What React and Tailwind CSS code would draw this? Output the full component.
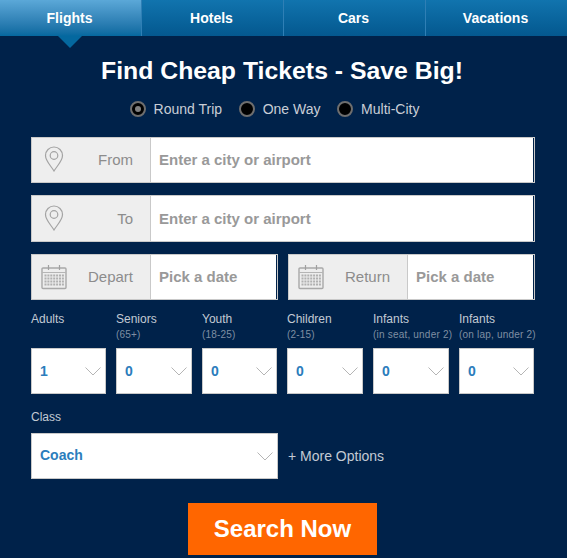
import React from 'react';

const FONT = "font-['Liberation_Sans',Arial,sans-serif]";

function Pin() {
  return (
    <svg width="20" height="26" viewBox="0 0 20 26" fill="none" stroke="#a3a3a3" strokeWidth="1.2">
      <path d="M10 25 C7 20 1.5 15 1.5 9.5 A8.5 8.5 0 0 1 18.5 9.5 C18.5 15 13 20 10 25 Z" />
      <circle cx="10" cy="9.5" r="3.8" />
    </svg>
  );
}

function Calendar() {
  const cells = [];
  for (let r = 0; r < 4; r++) {
    for (let c = 0; c < 7; c++) {
      cells.push(<rect key={`${r}-${c}`} x={3.5 + c * 2.9} y={10.5 + r * 3} width="2" height="2" fill="#b0b0b0" />);
    }
  }
  return (
    <svg width="26" height="26" viewBox="0 0 26 26" fill="none">
      <rect x="1" y="4" width="24" height="20.5" rx="1" fill="#ededed" stroke="#a8a8a8" strokeWidth="1.4" />
      <path d="M1 8.5 H25" stroke="#b5b5b5" />
      <path d="M7.5 1 V6 M18.5 1 V6" stroke="#a0a0a0" strokeWidth="1.2" />
      {cells}
    </svg>
  );
}

function Chevron() {
  return (
    <svg width="16" height="9" viewBox="0 0 16 9" fill="none" stroke="#b5b5b5" strokeWidth="1">
      <path d="M0.5 0.5 L8 8 L15.5 0.5" />
    </svg>
  );
}

function Field({ icon, label, placeholder, iconClass, height = 'h-[46px]', textClass = '' }) {
  return (
    <div className={`flex ${height} border border-[#c9c9c9] bg-white`}>
      <div className="flex w-[119px] shrink-0 items-center justify-between border-r border-[#c9c9c9] bg-[#eeeeee] pr-[17px]">
        <span className={iconClass}>{icon}</span>
        <span className={`text-[15px] text-[#8c8c8c] ${textClass}`}>{label}</span>
      </div>
      <div className="flex flex-1 items-center border-r border-[#00224a] pl-[8px] text-[15px] font-bold text-[#999999]">
        <span className={textClass}>{placeholder}</span>
      </div>
    </div>
  );
}

function Radio({ label, selected }) {
  return (
    <div className="flex items-center gap-[8px]">
      <span className="flex h-[16px] w-[16px] items-center justify-center rounded-full border-2 border-[#6e6e6e] bg-black">
        {selected && <span className="h-[6px] w-[6px] rounded-full bg-[#808080]" />}
      </span>
      <span className="text-[14px] text-[#c9ced6]">{label}</span>
    </div>
  );
}

function Select({ value, valueClass }) {
  return (
    <div className="flex h-[46px] items-center justify-between border border-[#c9c9c9] bg-white pl-[8px] pr-[4px] text-[14px] font-bold text-[#2b7dbc]">
      <span className={valueClass}>{value}</span>
      <Chevron />
    </div>
  );
}

const travellers = [
  { label: 'Adults', sub: '', value: '1' },
  { label: 'Seniors', sub: '(65+)', value: '0' },
  { label: 'Youth', sub: '(18-25)', value: '0' },
  { label: 'Children', sub: '(2-15)', value: '0' },
  { label: 'Infants', sub: '(in seat, under 2)', value: '0' },
  { label: 'Infants', sub: '(on lap, under 2)', value: '0' },
];

export default function App() {
  return (
    <div className={`${FONT} h-[558px] w-[567px] overflow-hidden bg-[#00224a]`}>
      {/* Tabs */}
      <div className="grid h-[36px] grid-cols-[141px_141px_141px_141px] gap-x-px bg-[#2f7fb5]">
        <div className="relative flex items-center justify-center bg-gradient-to-b from-[#5ba8d8] to-[#04689f] pr-[2px] text-[14px] font-bold text-white">
          Flights
          <span className="absolute left-[58px] top-[36px] h-0 w-0 border-x-[12px] border-t-[12px] border-x-transparent border-t-[#04689f]" />
        </div>
        <div className="flex items-center justify-center bg-gradient-to-b from-[#1174ae] to-[#04588f] pr-[2px] text-[14px] font-bold text-white">Hotels</div>
        <div className="flex items-center justify-center bg-gradient-to-b from-[#1174ae] to-[#04588f] pr-[2px] text-[14px] font-bold text-white">Cars</div>
        <div className="flex items-center justify-center bg-gradient-to-b from-[#1174ae] to-[#04588f] pr-[2px] text-[14px] font-bold text-white">Vacations</div>
      </div>

      <h1 className="mt-[19px] pr-[3px] text-center text-[24.8px] font-bold leading-[32px] text-white">Find Cheap Tickets - Save Big!</h1>

      <div className="mt-[12px] flex h-[20px] items-center justify-center gap-[16.6px] pr-[18px]">
        <Radio label="Round Trip" selected />
        <Radio label="One Way" />
        <Radio label="Multi-City" />
      </div>

      <div className="mt-[18px] flex flex-col px-[31px]">
        <div className="flex w-[504px] flex-col gap-[12px]">
          <Field icon={<Pin />} iconClass="-mt-[2px] ml-[12px]" label="From" placeholder="Enter a city or airport" />
          <Field icon={<Pin />} iconClass="-mt-[2px] ml-[12px]" label="To" placeholder="Enter a city or airport" height="h-[47px]" textClass="pt-[2px]" />
          <div className="grid grid-cols-[247px_247px] gap-x-[10px]">
            <Field icon={<Calendar />} iconClass="ml-[9px]" label="Depart" placeholder="Pick a date" />
            <Field icon={<Calendar />} iconClass="ml-[9px]" label="Return" placeholder="Pick a date" />
          </div>
        </div>

        <div className="mt-[11px] grid grid-cols-[75px_76px_75px_76px_76px_75px] gap-x-[10px]">
          {travellers.map((t, i) => (
            <div key={i}>
              <div className="text-[12px] leading-[16px] text-[#c3cad4]">{t.label}</div>
              <div className="h-[16px] whitespace-nowrap text-[10px] leading-[16px] tracking-[0.2px] text-[#7f8fa3]">{t.sub}</div>
              <div className="mt-[5px]">
                <Select value={t.value} />
              </div>
            </div>
          ))}
        </div>

        <div className="mt-[15px] text-[12px] leading-[16px] text-[#c3cad4]">Class</div>
        <div className="mt-[8px] flex items-center gap-[10px]">
          <div className="w-[247px]">
            <Select value="Coach" valueClass="pb-[2px]" />
          </div>
          <span className="text-[14px] text-[#c3cad4]">+ More Options</span>
        </div>

        <button className="ml-[157px] mt-[24px] h-[52px] w-[189px] bg-[#ff6600] text-[24px] font-bold text-white">Search Now</button>
      </div>
    </div>
  );
}
